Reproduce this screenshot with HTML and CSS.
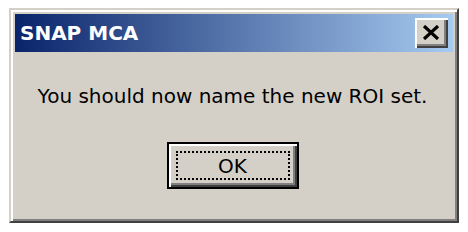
FILE: index.html
```html
<!DOCTYPE html>
<html lang="en">
<head>
    <meta charset="UTF-8">
    <title>SNAP MCA</title>
    <link rel="stylesheet" href="styles.css">
</head>
<body>
    <div class="window">
        <div class="titlebar">
            <span class="title">SNAP MCA</span>
            <button class="close-btn" aria-label="Close">
                <svg width="18" height="15" viewBox="0 0 18 15">
                    <path d="M2 1 L16 14 M16 1 L2 14" stroke="#000" stroke-width="3.2" fill="none"/>
                </svg>
            </button>
        </div>
        <div class="content">
            <p class="message">You should now name the new ROI set.</p>
            <button class="btn-ok"><span class="focus">OK</span></button>
        </div>
    </div>
</body>
</html>
```

FILE: styles.css
```css
* {
    margin: 0;
    padding: 0;
    box-sizing: border-box;
}

body {
    background: #fff;
    padding: 8px 0 0 9px;
    font-family: "DejaVu Sans", Verdana, sans-serif;
}

.window {
    width: 450px;
    height: 215px;
    background: #d4d0c8;
    border: 2px solid;
    border-color: #d4d0c8 #404040 #404040 #d4d0c8;
    box-shadow: inset 2px 2px #fff, inset -2px -2px #808080;
    padding: 4px;
}

.titlebar {
    height: 38px;
    display: flex;
    align-items: center;
    justify-content: space-between;
    padding: 0 5px;
    background: linear-gradient(to right, #0a246a, #a6caf0);
}

.title {
    color: #fff;
    font-weight: bold;
    font-size: 20px;
}

.close-btn {
    width: 33px;
    height: 30px;
    background: #d4d0c8;
    border: none;
    box-shadow: inset 2px 2px #fff, inset -2px -2px #404040, inset -4px -4px #808080;
    display: flex;
    align-items: center;
    justify-content: center;
    padding: 0 2px 2px 0;
}

.content {
    display: flex;
    flex-direction: column;
    align-items: center;
    padding-right: 3px;
}

.message {
    margin-top: 32px;
    font-size: 20px;
    line-height: 24px;
    color: #000;
}

.btn-ok {
    margin-top: 34px;
    width: 132px;
    height: 47px;
    background: #d4d0c8;
    border: 2px solid #000;
    box-shadow: inset 2px 2px #fff, inset -2px -2px #404040, inset -4px -4px #808080;
    padding: 7px;
    font-family: inherit;
    font-size: 20px;
    color: #000;
}

.focus {
    display: flex;
    align-items: center;
    justify-content: center;
    height: 100%;
    border: 2px dotted #000;
}
```
